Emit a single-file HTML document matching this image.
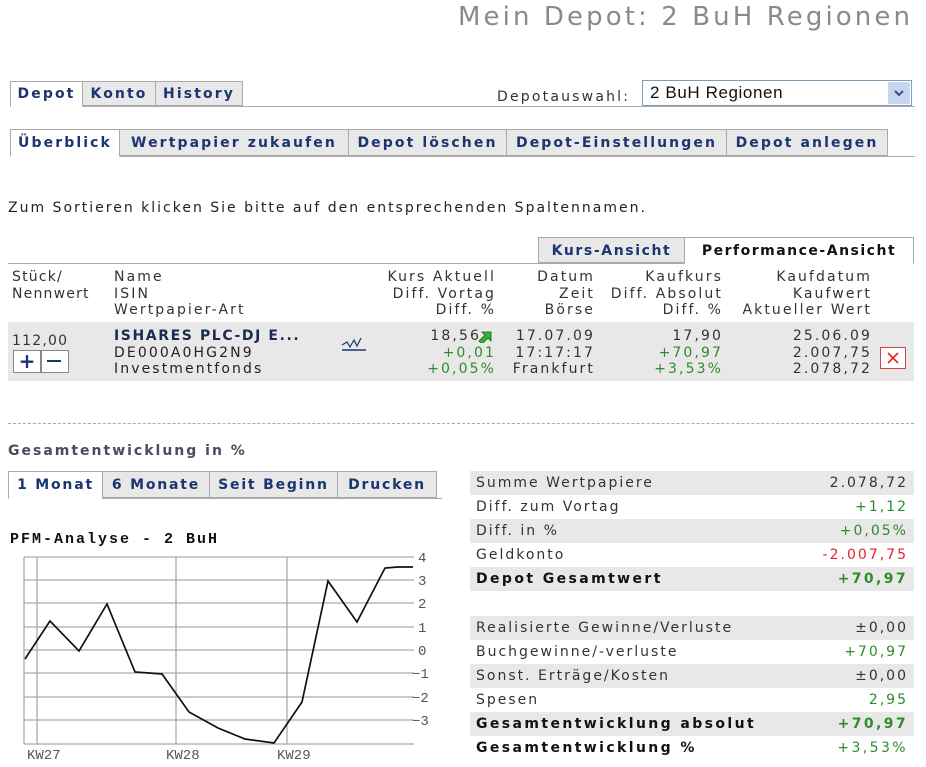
<!DOCTYPE html>
<html><head><meta charset="utf-8"><style>
body{margin:0;width:926px;height:767px;background:#fff;font-family:"DejaVu Sans",Verdana,sans-serif;font-size:14px;color:#222;position:relative;overflow:hidden;letter-spacing:2px}
.a{position:absolute;white-space:nowrap}
.tab{position:absolute;box-sizing:border-box;border:1px solid #aaa;background:#e8e8e8;color:#1a3570;font-weight:bold;text-align:center;font-size:14px;letter-spacing:2.1px;white-space:nowrap}
.tab.on{background:#fff;border-bottom-color:#fff;color:#1a3570}
.hl{position:absolute;height:1px;background:#aaa}
.g{color:#2e8b2e}
.r{color:#e8202a}
.h{color:#333;line-height:16.5px;letter-spacing:2.1px}
.row{position:absolute;left:470px;width:444px;height:24px;box-sizing:border-box;padding:0 6px 0 6px;line-height:24px;color:#333}
.row span{float:right}
.gr{background:#e8e8e8}
.b{font-weight:bold;color:#111;letter-spacing:2.4px}
</style></head><body>
<div class="a" style="left:458px;top:2px;font-size:26px;color:#8a8a8a;letter-spacing:3.1px">Mein Depot: 2 BuH Regionen</div>

<div class="hl" style="left:10px;top:106px;width:905px"></div>
<div class="tab on" style="left:10px;top:81px;width:73px;height:26px;line-height:25px">Depot</div>
<div class="tab" style="left:82px;top:81px;width:74px;height:25px;line-height:25px">Konto</div>
<div class="tab" style="left:155px;top:81px;width:88px;height:25px;line-height:25px">History</div>
<div class="a" style="left:497px;top:89px;font-size:14px;color:#333;letter-spacing:2.2px">Depotauswahl:</div>
<div class="a" style="left:642px;top:80px;width:270px;height:26px;box-sizing:border-box;border:1px solid #7f9db9;background:#fff;font-family:'Liberation Sans',sans-serif;font-size:17px;line-height:24px;padding-left:7px;color:#111;letter-spacing:0.6px">2 BuH Regionen
<div style="position:absolute;right:1px;top:1px;width:22px;height:22px;background:#c5d5f2;border-radius:2px"><svg width="22" height="22"><path d="M7 9l4 4 4-4" stroke="#3a4e80" stroke-width="2" fill="none"/></svg></div></div>

<div class="hl" style="left:10px;top:156px;width:905px"></div>
<div class="tab on" style="left:10px;top:129px;width:110px;height:28px;line-height:27px">Überblick</div>
<div class="tab" style="left:119px;top:129px;width:230px;height:27px;line-height:27px">Wertpapier zukaufen</div>
<div class="tab" style="left:348px;top:129px;width:159px;height:27px;line-height:27px">Depot löschen</div>
<div class="tab" style="left:506px;top:129px;width:221px;height:27px;line-height:27px">Depot-Einstellungen</div>
<div class="tab" style="left:726px;top:129px;width:162px;height:27px;line-height:27px">Depot anlegen</div>

<div class="a" style="left:8px;top:200px;color:#222">Zum Sortieren klicken Sie bitte auf den entsprechenden Spaltennamen.</div>

<div class="hl" style="left:8px;top:263px;width:906px"></div>
<div class="tab" style="left:538px;top:237px;width:147px;height:26px;line-height:26px;letter-spacing:1.6px">Kurs-Ansicht</div>
<div class="tab on" style="left:684px;top:237px;width:230px;height:27px;line-height:26px;color:#111;letter-spacing:1.5px">Performance-Ansicht</div>

<div class="a h" style="left:12px;top:269px;letter-spacing:1.2px">Stück/<br>Nennwert</div>
<div class="a h" style="left:114px;top:269px">Name<br>ISIN<br>Wertpapier-Art</div>
<div class="a h" style="left:360px;top:269px;width:136px;text-align:right">Kurs Aktuell<br>Diff. Vortag<br>Diff. %</div>
<div class="a h" style="left:500px;top:269px;width:95px;text-align:right">Datum<br>Zeit<br>Börse</div>
<div class="a h" style="left:580px;top:269px;width:143px;text-align:right">Kaufkurs<br>Diff. Absolut<br>Diff. %</div>
<div class="a h" style="left:710px;top:269px;width:162px;text-align:right">Kaufdatum<br>Kaufwert<br>Aktueller Wert</div>

<div class="a" style="left:8px;top:322px;width:906px;height:59px;background:#e8e8e8"></div>
<div class="a" style="left:12px;top:333px;color:#333;letter-spacing:1.2px">112,00</div>
<div class="a" style="left:13px;top:350px;width:26px;height:21px;border:1px solid #888;background:#fff"><div style="text-align:center;font-weight:bold;font-size:20px;line-height:20px;color:#1a3570;letter-spacing:0">+</div></div>
<div class="a" style="left:41px;top:350px;width:26px;height:21px;border:1px solid #888;background:#fff"></div>
<div class="a" style="left:47px;top:360px;width:14px;height:2px;background:#1a3570"></div>
<div class="a h" style="left:114px;top:328px;color:#222"><b style="color:#1a2a50;letter-spacing:1.6px">ISHARES PLC-DJ E...</b><br>DE000A0HG2N9<br>Investmentfonds</div>
<svg class="a" style="left:340px;top:335px" width="28" height="18"><path d="M2 10l5 -3 3 5 4 -7 3 6 4 -8" stroke="#1a3570" fill="none" stroke-width="1.2"/><path d="M2 15h24" stroke="#1a3570" stroke-width="1.5"/></svg>
<div class="a h" style="left:360px;top:328px;width:136px;text-align:right">18,56<span style="display:inline-block;width:15px"></span><br><span class="g">+0,01</span><br><span class="g">+0,05%</span></div>
<svg class="a" style="left:478px;top:329px" width="14" height="14"><path d="M1 12l6 -6 -3 -3h9v9l-3 -3 -6 6z" fill="#2fb82f" stroke="#185818" stroke-width="0.8"/></svg>
<div class="a h" style="left:500px;top:328px;width:95px;text-align:right">17.07.09<br>17:17:17<br>Frankfurt</div>
<div class="a h" style="left:580px;top:328px;width:143px;text-align:right">17,90<br><span class="g">+70,97</span><br><span class="g">+3,53%</span></div>
<div class="a h" style="left:710px;top:328px;width:162px;text-align:right">25.06.09<br>2.007,75<br>2.078,72</div>
<div class="a" style="left:880px;top:347px;width:26px;height:22px;border:1px solid #c44;background:#fff;box-sizing:border-box"><svg width="24" height="20"><path d="M7 5l10 10M17 5l-10 10" stroke="#e02020" stroke-width="1.6"/></svg></div>

<div class="a" style="left:8px;top:423px;width:906px;border-top:1px dashed #aaa"></div>

<div class="a" style="left:8px;top:443px;font-weight:bold;color:#4a4a60;letter-spacing:2px">Gesamtentwicklung in %</div>
<div class="hl" style="left:8px;top:498px;width:434px"></div>
<div class="tab on" style="left:8px;top:471px;width:95px;height:28px;line-height:27px;letter-spacing:1.8px">1 Monat</div>
<div class="tab" style="left:102px;top:471px;width:108px;height:27px;line-height:27px;letter-spacing:1.8px">6 Monate</div>
<div class="tab" style="left:209px;top:471px;width:129px;height:27px;line-height:27px;letter-spacing:1.8px">Seit Beginn</div>
<div class="tab" style="left:337px;top:471px;width:100px;height:27px;line-height:27px;letter-spacing:1.8px">Drucken</div>

<div class="a" style="left:10px;top:531px;font-family:'Liberation Mono',monospace;font-weight:bold;font-size:15px;color:#111;letter-spacing:2px">PFM-Analyse - 2 BuH</div>
<svg class="a" style="left:0;top:545px;letter-spacing:0" width="460" height="222" font-family="Liberation Mono,monospace" font-size="14" fill="#555">
<g stroke="#aaa" stroke-width="1.3">
<path d="M24 12h390M24 35h390M24 58h390M24 82h390M24 105h390M24 128h390M24 152h390M24 175h390M24 199h390"/>
<path d="M24 12v187M37 12v187M176 12v187M287 12v187"/>
</g>
<path d="M25 114L50 76 79 106 107 59 135 127 162 129 189 167 218 183 245 194 274 198 302 157 328 36 357 77 385 23 398 22 413 22" stroke="#111" stroke-width="1.7" fill="none"/>
<text x="418" y="17">4</text><text x="418" y="40">3</text><text x="418" y="63">2</text><text x="418" y="87">1</text><text x="418" y="110">0</text><text x="412" y="133">−1</text><text x="412" y="157">−2</text><text x="412" y="180">−3</text>
<text x="27" y="214">KW27</text><text x="166" y="214">KW28</text><text x="277" y="214">KW29</text>
</svg>

<div class="row gr" style="top:471px">Summe Wertpapiere<span>2.078,72</span></div>
<div class="row" style="top:495px">Diff. zum Vortag<span class="g">+1,12</span></div>
<div class="row gr" style="top:519px">Diff. in %<span class="g">+0,05%</span></div>
<div class="row" style="top:543px">Geldkonto<span class="r">-2.007,75</span></div>
<div class="row gr b" style="top:567px">Depot Gesamtwert<span class="g">+70,97</span></div>

<div class="row gr" style="top:616px">Realisierte Gewinne/Verluste<span>±0,00</span></div>
<div class="row" style="top:640px">Buchgewinne/-verluste<span class="g">+70,97</span></div>
<div class="row gr" style="top:664px">Sonst. Erträge/Kosten<span>±0,00</span></div>
<div class="row" style="top:688px">Spesen<span class="g">2,95</span></div>
<div class="row gr b" style="top:712px">Gesamtentwicklung absolut<span class="g">+70,97</span></div>
<div class="row b" style="top:736px">Gesamtentwicklung %<span class="g" style="font-weight:normal">+3,53%</span></div>
</body></html>
